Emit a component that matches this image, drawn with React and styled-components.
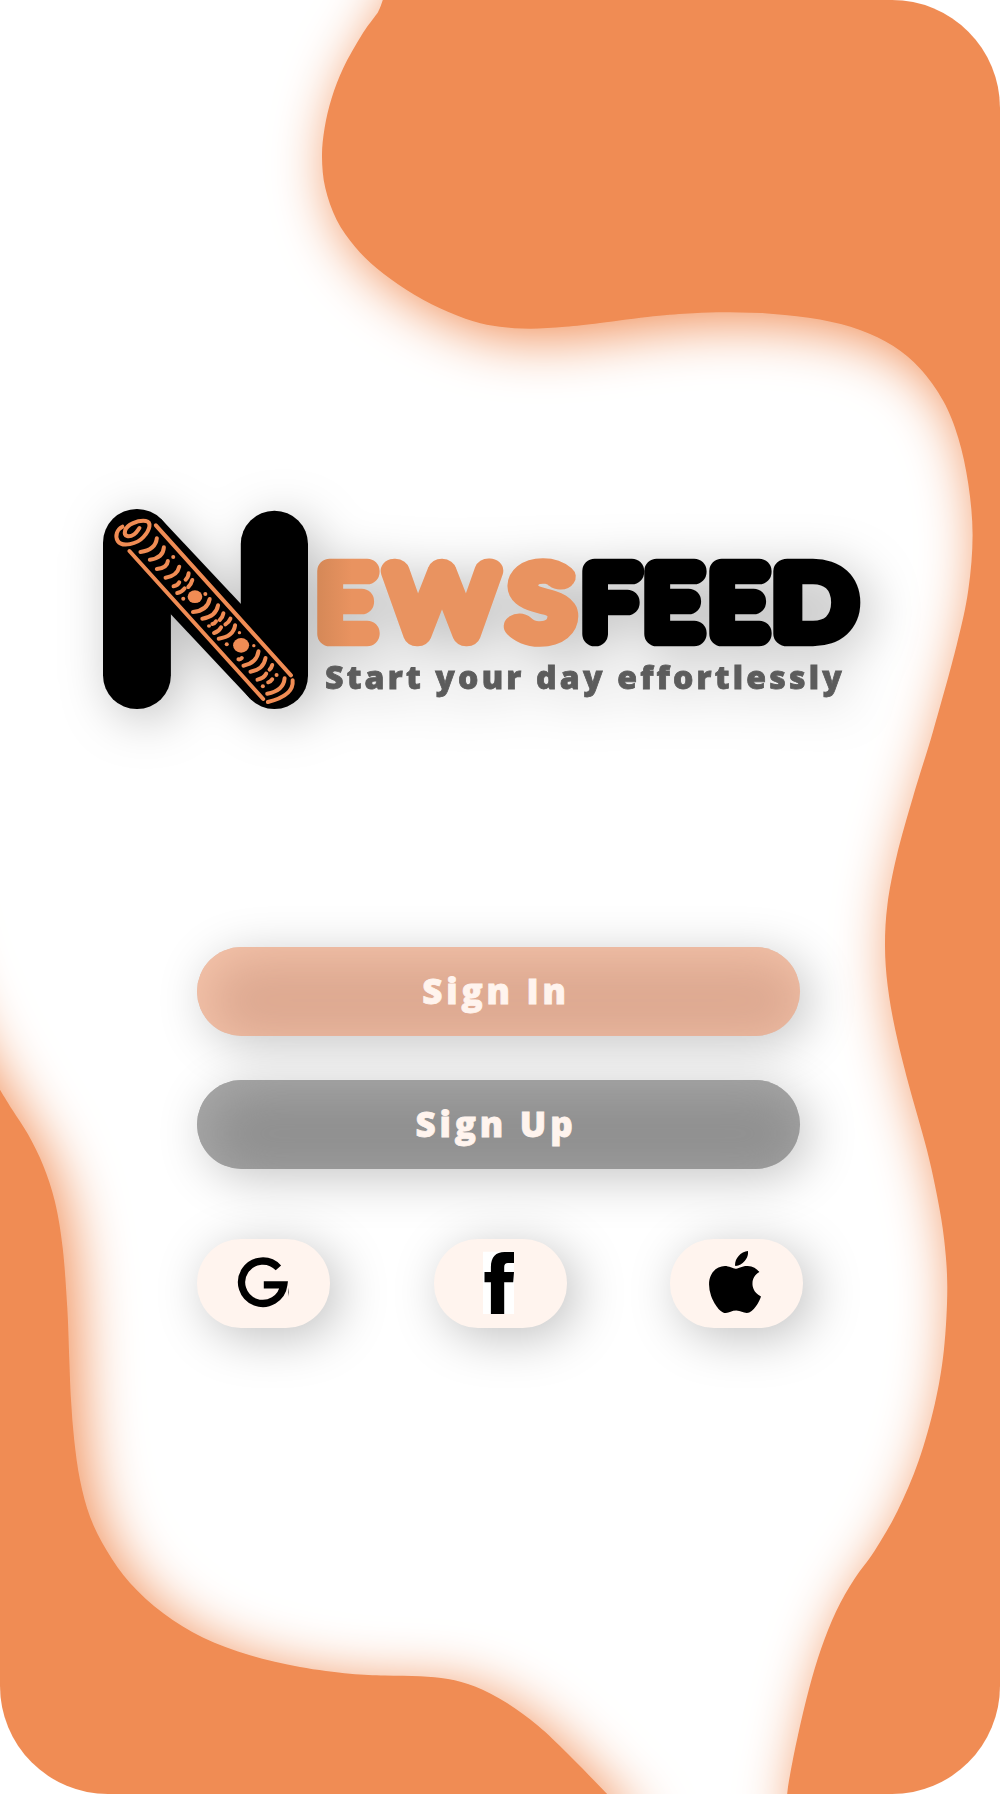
import React from "react";
import styled, { createGlobalStyle } from "styled-components";

const ORANGE = "#f08c54";

const GlobalStyle = createGlobalStyle`
  *, *::before, *::after { box-sizing: border-box; }
  body { margin: 0; background: #fff; }
`;

const Screen = styled.main`
  position: relative;
  width: 1000px;
  height: 1794.4px;
  padding: 508px 0 0 103px;
  overflow: hidden;
  border-radius: 108px;
  background: #fff;
  font-family: "Open Sans", "Noto Sans", sans-serif;
`;

const Backdrop = styled.svg`
  position: absolute;
  inset: 0;
  width: 1000px;
  height: 1795px;
`;

const Content = styled.div`
  position: relative;
  display: flex;
  flex-direction: column;
`;

const Brand = styled.header`
  display: flex;
  height: 201px;
  filter: drop-shadow(9px 9px 25px rgba(0, 0, 0, 0.26));
`;

const Mark = styled.svg`
  flex: none;
  width: 205px;
  height: 200px;
  margin-top: 0.5px;
`;

const BrandText = styled.div`
  display: flex;
  flex-direction: column;
  padding-top: 22px;
`;

const Wordmark = styled.svg`
  flex: none;
  width: 560px;
  height: 125px;
  overflow: visible;
  font-family: Lato, sans-serif;
  font-weight: 100;
`;

const Tagline = styled.p`
  margin: 0 0 0 17px;
  color: #5c5c5c;
  font-size: 32px;
  font-weight: 800;
  line-height: 44px;
  letter-spacing: 3.2px;
  white-space: nowrap;
  -webkit-text-stroke: 0.8px #5c5c5c;
`;

const Actions = styled.div`
  display: flex;
  flex-direction: column;
  gap: 44px;
  width: 603px;
  margin: 238px 0 0 94px;
`;

const PillButton = styled.button`
  height: 89px;
  padding: 0 5px 2px 0;
  border: 0;
  border-radius: 45px;
  background: ${(p) => p.$core};
  box-shadow: 9px 9px 50px rgba(0, 0, 0, 0.23), inset 9px 9px 50px ${(p) => p.$rim};
  color: #fff4ee;
  font: 800 35px/1 "Open Sans", "Noto Sans", sans-serif;
  letter-spacing: 3.8px;
  -webkit-text-stroke: 0.8px #fff4ee;
`;

const SocialRow = styled.nav`
  display: flex;
  justify-content: space-between;
  width: 606px;
  margin: 70px 0 0 94px;
`;

const SocialButton = styled.button`
  display: flex;
  width: 133px;
  height: 89px;
  padding: 0;
  border: 0;
  border-radius: 44px;
  background: #fff4ee;
  box-shadow: 9px 9px 50px rgba(0, 0, 0, 0.25);
`;

const SocialIcon = styled.svg`
  width: 133px;
  height: 89px;
`;

// Catmull-Rom spline through the points, as cubic segments.
const spline = (pts) => {
  let d = `M${pts[0][0]} ${pts[0][1]}`;
  for (let i = 0; i < pts.length - 1; i++) {
    const a = pts[i - 1] || pts[i];
    const b = pts[i];
    const c = pts[i + 1];
    const e = pts[i + 2] || c;
    d += `C${b[0] + (c[0] - a[0]) / 6} ${b[1] + (c[1] - a[1]) / 6} ${c[0] - (e[0] - b[0]) / 6} ${c[1] - (e[1] - b[1]) / 6} ${c[0]} ${c[1]}`;
  }
  return d;
};

const RIGHT_WAVE = [
  [392, -30], [382.8, 0], [378.3, 11.5], [374.5, 17], [361.7, 35], [343.3, 68], [331.7, 98],
  [324.6, 128], [322, 157], [325.3, 188], [336.7, 220], [355, 246.7], [376.7, 268.3], [406.7, 290],
  [440, 308.3], [473.3, 321.3], [500, 326.7], [530, 328.7], [565, 326.8], [600, 323], [653.3, 316.3],
  [693.3, 313.2], [730, 312.3], [773.3, 313.9], [820, 319.5], [860, 330], [893.3, 346],
  [920, 368.5], [943.3, 401], [958.3, 438], [968.3, 484], [972.6, 535], [968.3, 590],
  [956.7, 645], [933, 731.6], [913.3, 796], [896.7, 856], [887.5, 904], [885, 946],
  [887.7, 986], [895.3, 1030], [908.3, 1083], [926.7, 1149], [937.3, 1197], [944.2, 1240],
  [947.3, 1288], [943.9, 1350], [934.8, 1404], [918.6, 1461], [897.5, 1511], [874.5, 1551],
  [854.4, 1579], [836.3, 1611], [821, 1649], [809, 1689], [798, 1735], [790, 1775], [787, 1796],
  [784, 1830],
];

const LEFT_WAVE = [
  [-90, 830], [-68, 940], [-38, 1020], [-17, 1060], [0, 1089.7], [12.5, 1110], [28, 1134.3],
  [43.3, 1165.7], [55, 1202], [62.7, 1248], [67.3, 1308], [69.3, 1360], [71, 1400], [74.2, 1440],
  [80, 1480], [90, 1516.7], [106.7, 1550.5], [130, 1583], [163.3, 1613.3], [203.3, 1637.7],
  [250, 1655.3], [300, 1667], [350, 1673.7], [385, 1675.6], [420, 1676.3], [448, 1679],
  [475, 1686.5], [507, 1703], [538, 1725.8], [568, 1754], [609, 1796], [640, 1830],
];

const STRIPES = [
  "M201 143Q197 178 152 184", "M222 170Q220 202 180 207", "M234 211Q232 232 201 235",
  "M268 228Q262 256 227 261", "M296 248Q295 260 287 267", "M268 275Q264 285 251 287",
  "M307 268Q304 280 295 289", "M284 293Q276 304 262 307", "M359 325Q352 360 309 364",
  "M384 344Q378 377 337 384", "M400 368Q398 380 389 388", "M378 392Q374 399 367 400",
  "M421 384Q417 394 406 401", "M393 410Q386 423 372 427", "M435 404Q430 438 386 444",
  "M505 482Q500 517 460 525", "M455 502Q451 507 445 506", "M526 502Q520 537 481 543",
  "M546 523Q544 531 538 537", "M528 549Q522 562 502 567", "M546 566Q542 573 534 575",
  "M583 563Q580 600 531 609", "M607 569Q612 615 533 634",
];

const DOTS = [
  [250, 199, 6, 6], [280, 324, 6, 6], [315, 318, 22, 19], [346, 310, 6, 6], [357, 406, 6, 5],
  [448, 426, 5, 5], [410, 461, 6, 6], [453, 464, 24, 22], [491, 465, 5, 5], [559, 553, 6, 6],
  [518, 587, 6, 6],
];

// Each letter is a light skeleton thickened by a round stroke.
const LETTERS = [
  { ch: "E", x: 11, w: 53.5, fill: "url(#shade)" },
  { ch: "W", x: 83.2, w: 101.5, fill: "#e99360" },
  { ch: "S", x: 204.6, w: 58, fill: "#e99360" },
  { ch: "F", x: 276, w: 51.5, fill: "#000" },
  { ch: "E", x: 338, w: 53.5, fill: "#000" },
  { ch: "E", x: 403, w: 53.5, fill: "#000" },
  { ch: "D", x: 467.2, w: 78.3, fill: "#000" },
];

const Waves = () => (
  <Backdrop viewBox="0 0 1000 1795" aria-hidden="true">
    <defs>
      <filter
        id="glow"
        filterUnits="userSpaceOnUse"
        colorInterpolationFilters="sRGB"
        x="-200"
        y="-200"
        width="1400"
        height="2200"
      >
        <feDropShadow dx="9" dy="9" stdDeviation="28" floodColor={ORANGE} floodOpacity="1" />
      </filter>
    </defs>
    <path d={`${spline(RIGHT_WAVE)}L1150 1830L1150 -30Z`} fill={ORANGE} filter="url(#glow)" />
    <path d={`${spline(LEFT_WAVE)}L-150 1830L-150 800Z`} fill={ORANGE} filter="url(#glow)" />
  </Backdrop>
);

const LogoMark = () => (
  <Mark viewBox="40 55 613 600" preserveAspectRatio="none" aria-hidden="true">
    <rect x="40" y="55" width="203" height="600" rx="101" />
    <rect x="452" y="60" width="201" height="595" rx="100" />
    <path d="M214 85L560 455L480 624L141 262Z" />
    <g fill="none" stroke={ORANGE} strokeWidth="12" strokeLinecap="round" strokeLinejoin="round">
      <path d="M198 104L602 554M119 181L519 625" />
      <path d="M98 108C82 116 75 136 84 151C98 171 142 160 161 139C182 116 185 94 168 91C145 88 111 101 106 120C101 139 119 140 133 131C141 126 144 118 149 112" />
      {STRIPES.map((d) => <path key={d} d={d} />)}
    </g>
    <g fill={ORANGE}>
      {DOTS.map(([cx, cy, rx, ry]) => <ellipse key={`${cx}-${cy}`} cx={cx} cy={cy} rx={rx} ry={ry} />)}
    </g>
  </Mark>
);

const LogoText = () => (
  <Wordmark viewBox="0 -20 560 125">
    <defs>
      <linearGradient id="shade" gradientUnits="userSpaceOnUse" x1="9" y1="0" x2="44" y2="0">
        <stop offset="0" stopColor="#d58857" />
        <stop offset="1" stopColor="#e99360" />
      </linearGradient>
    </defs>
    {LETTERS.map(({ ch, x, w, fill }, i) => (
      <text
        key={i}
        x={x}
        y="84"
        fontSize="91"
        textLength={w}
        lengthAdjust="spacingAndGlyphs"
        fill={fill}
        stroke={fill}
        strokeWidth="24.6"
        strokeLinejoin="round"
        strokeLinecap="round"
      >
        {ch}
      </text>
    ))}
  </Wordmark>
);

const GoogleIcon = () => (
  <SocialIcon viewBox="197 1239 133 89">
    <path
      d="M277.6 1267.2A21.2 21.2 0 1 0 283 1284.2H263"
      transform="translate(.8 .7)"
      fill="none"
      stroke="#000"
      strokeWidth="7.3"
    />
    <path d="M288.3 1287Q289.4 1292 288.3 1297Z" />
  </SocialIcon>
);

const FacebookIcon = () => (
  <SocialIcon viewBox="433.5 1239 133 89">
    <path d="M482.5 1251.7H513.5V1314H482.5Z" fill="#fff" />
    <path d="M490.4 1314V1282.3H484V1272H490.4V1267C490.4 1257 495.5 1252 504 1252H513.5V1263H507.5Q503.7 1263 503.7 1267V1272H513.5L512.7 1282.3H503.7V1314Z" />
  </SocialIcon>
);

const AppleIcon = () => (
  <SocialIcon viewBox="670 1239 133 89">
    <path
      transform="translate(708.5 1246.7) scale(.138)"
      d="M318.7 268.7c-.2-36.7 16.4-64.4 50-84.8-18.8-26.9-47.2-41.7-84.7-44.6-35.5-2.8-74.3 20.7-88.5 20.7-15 0-49.4-19.7-76.4-19.7C63.3 141.2 4 184.8 4 273.5q0 39.3 14.4 81.2c12.8 36.7 59 126.7 107.2 125.2 25.2-.6 43-17.9 75.8-17.9 31.8 0 48.3 17.9 76.4 17.9 48.6-.7 90.4-82.5 102.6-119.3-65.2-30.7-61.7-90-61.7-91.9zm-56.6-164.2c27.3-32.4 24.8-61.9 24-72.5-24.1 1.4-52 16.4-67.9 34.9-17.5 19.8-27.8 44.3-25.6 71.9 26.1 2 49.9-11.4 69.5-34.3z"
    />
  </SocialIcon>
);

export default function App() {
  return (
    <>
      <GlobalStyle />
      <Screen>
        <Waves />
        <Content>
          <Brand>
            <LogoMark />
            <BrandText>
              <LogoText />
              <Tagline>Start your day effortlessly</Tagline>
            </BrandText>
          </Brand>
          <Actions>
            <PillButton $core="#dda991" $rim="#f5c4ab">Sign In</PillButton>
            <PillButton $core="#909090" $rim="#a9a9a9">Sign Up</PillButton>
          </Actions>
          <SocialRow>
            <SocialButton aria-label="Google"><GoogleIcon /></SocialButton>
            <SocialButton aria-label="Facebook"><FacebookIcon /></SocialButton>
            <SocialButton aria-label="Apple"><AppleIcon /></SocialButton>
          </SocialRow>
        </Content>
      </Screen>
    </>
  );
}
